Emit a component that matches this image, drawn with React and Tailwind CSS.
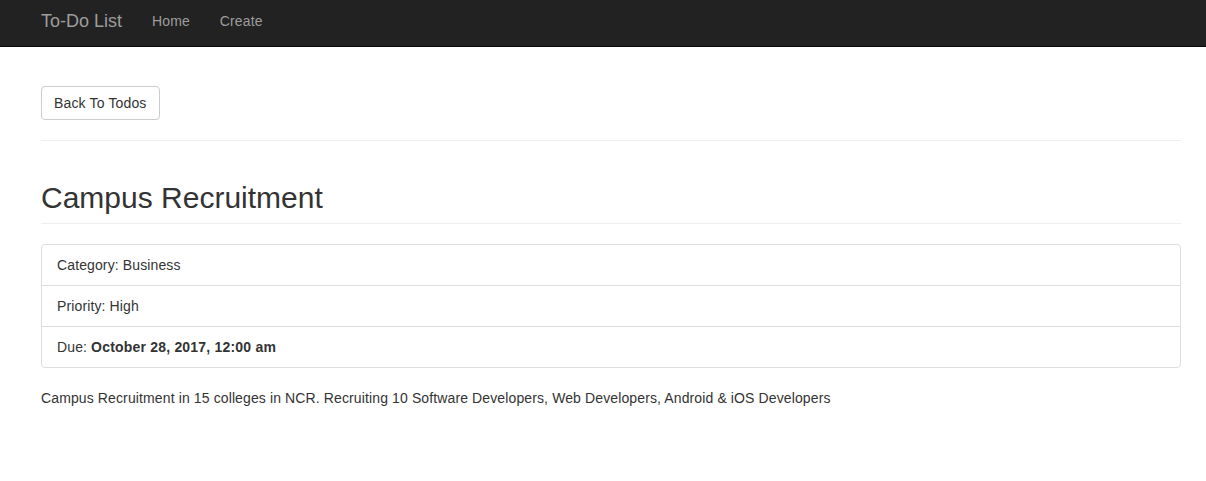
export default function App() {
  const font = { fontFamily: '"Liberation Sans", Arial, Helvetica, sans-serif' };
  return (
    <div className="min-h-[481px] bg-white text-[14px] leading-[20px] text-[#333] tracking-[0.12px]" style={font}>
      <nav className="h-[47px] bg-[#222] border-b border-[#080808] box-border">
        <div className="flex items-start pl-[41px] pt-[11px]">
          <a className="text-[18px] leading-[20px] text-[#9d9d9d] pr-[15px] tracking-normal">To-Do List</a>
          <a className="text-[14px] leading-[20px] text-[#9d9d9d] px-[15px]">Home</a>
          <a className="text-[14px] leading-[20px] text-[#9d9d9d] px-[15px]">Create</a>
        </div>
      </nav>
      <div className="ml-[41px] w-[1140px] pt-[39px]">
        <button className="h-[34px] px-[12px] border border-[#ccc] rounded-[4px] bg-white text-[14px] text-[#333] leading-[20px] tracking-[0.15px]">
          Back To Todos
        </button>
        <div className="mt-[20px] h-px bg-[#eee]" />
        <div className="mt-[37px] pb-[6px] border-b border-[#eee]">
          <h1 className="text-[30px] leading-[39px] font-normal text-[#333] tracking-normal">Campus Recruitment</h1>
        </div>
        <ul className="mt-[20px] border border-[#ddd] rounded-[4px]">
          <li className="px-[15px] py-[10px] border-b border-[#ddd]">Category: Business</li>
          <li className="px-[15px] py-[10px] border-b border-[#ddd]">Priority: High</li>
          <li className="px-[15px] py-[10px]">
            Due: <strong className="font-bold tracking-[0.2px]">October 28, 2017, 12:00 am</strong>
          </li>
        </ul>
        <p className="mt-[20px]">
          Campus Recruitment in 15 colleges in NCR. Recruiting 10 Software Developers, Web Developers, Android &amp; iOS Developers
        </p>
      </div>
    </div>
  );
}
